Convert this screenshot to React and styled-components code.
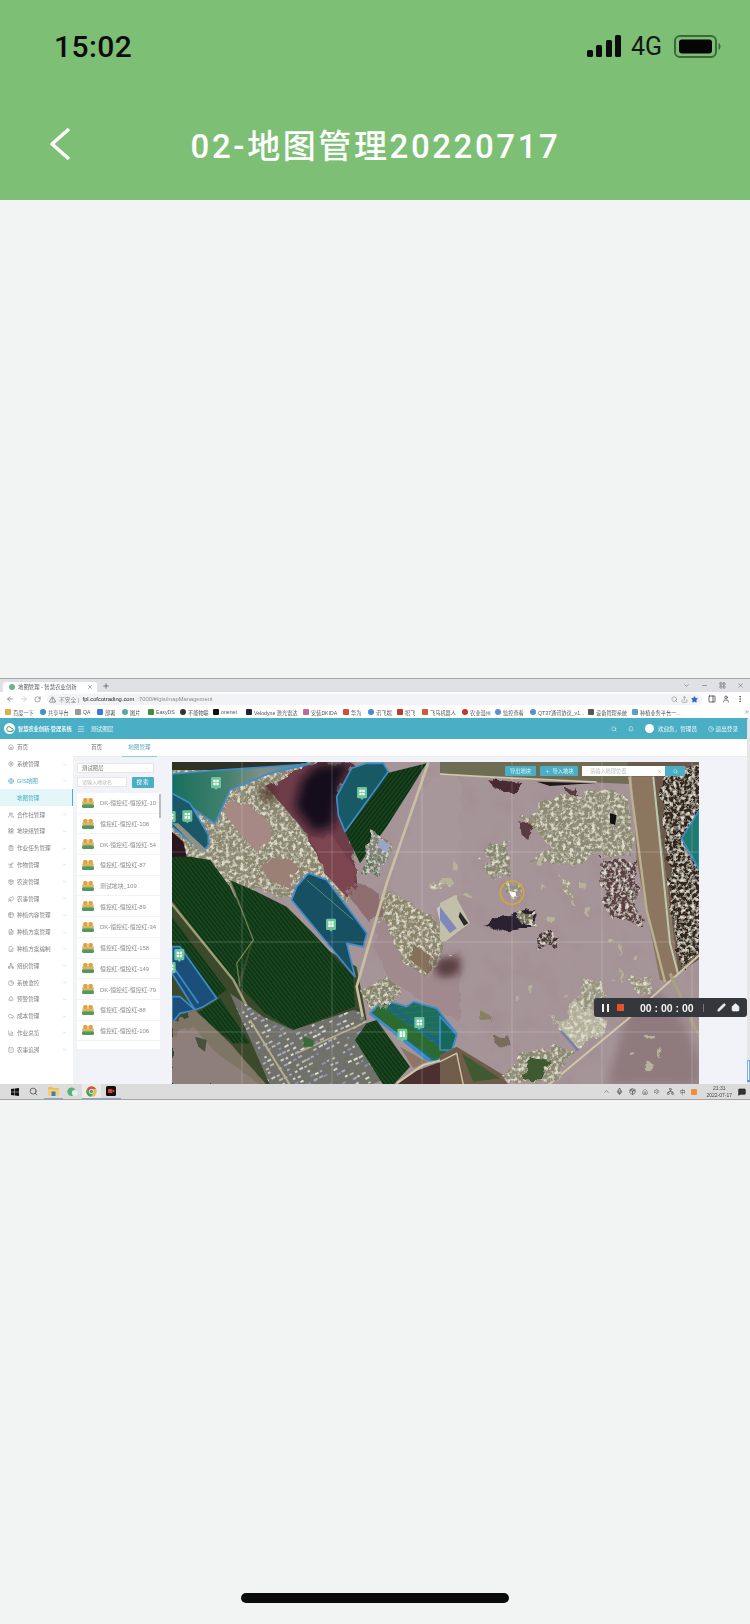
import React from 'react';
import styled, { createGlobalStyle } from 'styled-components';
import {
  Home, Settings, Globe, Users, LayoutGrid, ClipboardList, Sprout, Package, Leaf, Table2,
  FileText, FilePenLine, Network, Clock3, Bell, Cloud, BarChart3, SquareCheck,
  Search, Menu, X, Star, Share, User, MoreVertical, PanelRight, ArrowLeft, ArrowRight,
  RotateCw, TriangleAlert, Minus, ChevronDown, ChevronsRight, Plus, Mic, Volume1, MessageSquare, Pen,
} from 'lucide-react';

const FONT = '"Liberation Sans", "Noto Sans CJK SC", sans-serif';
const TEAL = '#4aaec4';

const GlobalStyle = createGlobalStyle`
  html, body { margin: 0; padding: 0; background: #f2f3f3; }
  body { font-family: ${FONT}; }
`;

// phone chrome
const Page = styled.div`
  width: 750px;
  height: 1624px;
  overflow: hidden;
  display: flex;
  flex-direction: column;
  background: #f2f3f3;
`;
const GreenHeader = styled.header`
  height: 200px;
  flex: none;
  background: #7dbf75;
`;
const StatusRow = styled.div`
  height: 92px;
  padding: 0 29px 0 54px;
  box-sizing: border-box;
  display: flex;
  align-items: center;
  justify-content: space-between;
`;
const Clock = styled.span`
  font-family: Roboto, ${FONT};
  font-size: 30px;
  font-weight: 500;
  letter-spacing: 0.4px;
  color: #0c0c0c;
`;
const StatusRight = styled.div`
  display: flex;
  align-items: center;
  gap: 10px;
`;
const Net = styled.span`
  font-family: Roboto, ${FONT};
  font-size: 25px;
  color: #161616;
  margin-right: 2px;
`;
const NavRow = styled.div`
  height: 104px;
  display: grid;
  grid-template-columns: 1fr auto 1fr;
  align-items: center;
  padding: 0 0 0 49px;
  margin-right: 48px;
`;
const NavTitle = styled.h1`
  margin: 0;
  font-family: Roboto, ${FONT};
  font-size: 33px;
  font-weight: 500;
  letter-spacing: 2.6px;
  color: #fff;
  white-space: nowrap;
`;
const HomeBar = styled.div`
  width: 268px;
  height: 10px;
  margin: 493px auto 0;
  border-radius: 5px;
  background: #0a0a0a;
`;

// the recorded desktop picture
const Frame = styled.section`
  position: relative;
  height: 422px;
  flex: none;
  margin-top: 478px;
  display: flex;
  flex-direction: column;
  overflow: hidden;
  filter: blur(0.45px);
  background: #fff;
`;
const TabStrip = styled.div`
  height: 14px;
  box-sizing: border-box;
  flex: none;
  display: flex;
  align-items: flex-end;
  background: #dfe1e5;
  border-top: 1px solid #a8a8a8;
  padding-left: 3px;
`;
const BrowserTab = styled.div`
  width: 94px;
  height: 10px;
  box-sizing: border-box;
  padding: 0 4px 0 6px;
  display: flex;
  align-items: center;
  gap: 3px;
  background: #fff;
  border-radius: 3px 3px 0 0;
  font-size: 5.4px;
  color: #555;
  white-space: nowrap;
  overflow: hidden;
`;
const TabText = styled.span`
  flex: 1;
`;
const NewTab = styled.span`
  display: flex;
  align-self: center;
  margin-left: 5px;
  color: #444;
`;
const WindowBtns = styled.div`
  margin-left: auto;
  align-self: center;
  display: flex;
  gap: 11px;
  padding-right: 6px;
  color: #666;
`;
const UrlBar = styled.div`
  height: 14px;
  flex: none;
  display: flex;
  align-items: center;
  gap: 6px;
  padding: 0 6px;
  background: #fff;
  color: #666;
`;
const Omnibox = styled.div`
  flex: 1;
  height: 11px;
  padding: 0 4px 0 2px;
  display: flex;
  align-items: center;
  gap: 3px;
  border-radius: 6px;
  background: #f1f3f4;
  font-size: 5.8px;
  color: #8a8a8a;
`;
const Host = styled.span`
  color: #222;
`;
const Spacer = styled.span`
  flex: 1;
`;
const BookmarkBar = styled.div`
  height: 12px;
  flex: none;
  display: flex;
  align-items: center;
  padding-left: 5px;
  background: #fff;
  overflow: hidden;
`;
const Bookmark = styled.span`
  width: ${p => p.$w}px;
  flex: none;
  display: flex;
  align-items: center;
  gap: 2px;
  font-size: 5.2px;
  color: #555;
  white-space: nowrap;
`;
const Fav = styled.i`
  width: 6px;
  height: 6px;
  flex: none;
  border-radius: ${p => (p.$round ? '50%' : '1px')};
  background: ${p => p.$c};
`;
const AppHeader = styled.div`
  height: 21px;
  flex: none;
  margin-right: 2px;
  display: flex;
  align-items: center;
  padding: 0 10px 0 4px;
  background: ${TEAL};
  color: #eef8fa;
  font-size: 5.6px;
`;
const Logo = styled.span`
  width: 11px;
  height: 11px;
  flex: none;
  border-radius: 50%;
  background: #fff;
  display: flex;
  align-items: center;
  justify-content: center;
  margin-right: 3px;
`;
const SystemName = styled.b`
  width: 59px;
  font-size: 5.2px;
  white-space: nowrap;
`;
const HeaderLabel = styled.span`
  margin-left: 6px;
`;
const HeaderRight = styled.div`
  margin-left: auto;
  display: flex;
  align-items: center;
`;
const HeaderIcon = styled.span`
  display: flex;
  margin-right: 11px;
`;
const Avatar = styled.span`
  width: 9px;
  height: 9px;
  margin-right: 4px;
  border-radius: 50%;
  background: #fff;
`;
const Welcome = styled.span`
  margin-right: 11px;
`;
const Body = styled.div`
  flex: 1;
  display: flex;
  min-height: 0;
`;
const Sidebar = styled.nav`
  width: 73px;
  flex: none;
  background: #fff;
`;
const SideItem = styled.div`
  height: 16.8px;
  box-sizing: border-box;
  display: flex;
  align-items: center;
  gap: 3px;
  padding: 0 ${p => (p.$sub ? 0 : 6)}px 0 ${p => (p.$sub ? 17 : 8)}px;
  font-size: 5.6px;
  white-space: nowrap;
  color: ${p => (p.$on ? TEAL : '#808080')};
  background: ${p => (p.$sub ? '#e4f6f8' : 'transparent')};
  border-right: ${p => (p.$sub ? `1.5px solid ${TEAL}` : '0')};
`;
const Caret = styled.span`
  margin-left: auto;
  display: flex;
  color: #b5b5b5;
`;
const Main = styled.div`
  flex: 1;
  display: flex;
  flex-direction: column;
  min-width: 0;
`;
const PageTabs = styled.div`
  height: 18px;
  flex: none;
  box-sizing: border-box;
  display: flex;
  background: #fff;
  padding-left: 12px;
  gap: 14px;
  border-bottom: 1px solid #ececec;
`;
const PageTab = styled.span`
  padding: 0 6px;
  line-height: 17px;
  font-size: 5.6px;
  color: ${p => (p.$on ? '#5aa9b8' : '#777')};
  border-bottom: ${p => (p.$on ? '1px solid #8fd0d8' : '0')};
  height: 17px;
`;
const Content = styled.div`
  flex: 1;
  min-height: 0;
  display: flex;
  background: #f1f3f8;
  padding: 5px 0 0 4px;
`;
const ListCol = styled.div`
  width: 83px;
  flex: none;
  padding-top: 1px;
`;
const SelectBox = styled.div`
  width: 77px;
  height: 10px;
  box-sizing: border-box;
  padding: 0 4px;
  display: flex;
  align-items: center;
  justify-content: space-between;
  background: #fff;
  border: 0.5px solid #e6e6e6;
  border-radius: 1px;
  font-size: 5.4px;
  color: #777;
`;
const SearchRow = styled.div`
  width: 77px;
  margin: 4px 0 5px;
  display: flex;
  justify-content: space-between;
`;
const NameInput = styled.div`
  width: 50px;
  height: 10px;
  box-sizing: border-box;
  padding-left: 4px;
  background: #fff;
  border: 0.5px solid #e6e6e6;
  font-size: 5px;
  line-height: 9px;
  color: #b9b9b9;
`;
const SearchBtn = styled.div`
  width: 22px;
  height: 11px;
  text-align: center;
  background: ${TEAL};
  border-radius: 1px;
  font-size: 5.6px;
  line-height: 11px;
  letter-spacing: 1px;
  color: #fff;
`;
const List = styled.div`
  position: relative;
  height: 256px;
  background: #fff;
`;
const ListItem = styled.div`
  height: 20.7px;
  box-sizing: border-box;
  display: flex;
  align-items: center;
  gap: 6px;
  padding-left: 5px;
  font-size: 5.9px;
  color: #8c8c8c;
  white-space: nowrap;
  border-bottom: 0.5px solid #f1f3f8;
`;
const ListThumb = styled.div`
  position: absolute;
  top: 1px;
  right: -1px;
  width: 2px;
  height: 24px;
  background: #b9bcc2;
`;
const MapWrap = styled.div`
  position: relative;
  width: 527px;
  flex: none;
  margin-left: 12px;
  overflow: hidden;
`;
const MapSvg = styled.svg`
  display: block;
  filter: blur(0.55px);
`;
const MapTools = styled.div`
  position: absolute;
  top: 4px;
  right: 14px;
  display: flex;
  align-items: stretch;
  height: 10px;
  gap: 4px;
  font-size: 5.2px;
  line-height: 10px;
  color: #eafafc;
`;
const ToolBtn = styled.span`
  width: ${p => p.$w}px;
  display: flex;
  align-items: center;
  justify-content: center;
  gap: 3px;
  background: ${TEAL};
  border-radius: 1px;
`;
const PlaceSearch = styled.div`
  display: flex;
`;
const PlaceInput = styled.div`
  width: 83px;
  box-sizing: border-box;
  padding: 0 3px 0 8px;
  display: flex;
  align-items: center;
  justify-content: space-between;
  background: #fff;
  color: #bbb;
`;
const PlaceBtn = styled.span`
  width: 20px;
  display: flex;
  align-items: center;
  justify-content: center;
  background: ${TEAL};
`;
const Taskbar = styled.div`
  height: 16px;
  flex: none;
  box-sizing: border-box;
  display: flex;
  align-items: center;
  padding: 0 4px 0 5px;
  background: #dcdcdc;
  border-bottom: 1px solid #a5a5a5;
`;
const TaskSlot = styled.span`
  width: 19.3px;
  height: 15px;
  display: flex;
  align-items: center;
  justify-content: center;
  box-sizing: border-box;
  background: ${p => (p.$active ? '#ebebeb' : 'transparent')};
  border-bottom: ${p => (p.$open ? '1px solid #8aa7c9' : '0')};
  color: #444;
`;
const Tray = styled.div`
  margin-left: auto;
  display: flex;
  align-items: center;
  gap: 6px;
  color: #555;
  font-size: 5.5px;
`;
const TrayClock = styled.span`
  margin-left: 3px;
  text-align: center;
  line-height: 7px;
  font-size: 5px;
  color: #444;
`;
const RecBar = styled.div`
  position: absolute;
  left: 594px;
  top: 320px;
  width: 153px;
  height: 19px;
  box-sizing: border-box;
  display: flex;
  align-items: center;
  padding-left: 8px;
  background: #34373b;
  border-radius: 3px;
  color: #f2f2f2;
`;
const PauseIcon = styled.span`
  width: 7px;
  height: 8px;
  flex: none;
  box-sizing: border-box;
  border-left: 2px solid #eee;
  border-right: 2px solid #eee;
`;
const StopIcon = styled.span`
  width: 7px;
  height: 7px;
  flex: none;
  margin: 0 16px 0 8px;
  background: #e5532f;
`;
const RecTime = styled.span`
  width: 55px;
  flex: none;
  font-size: 10.5px;
  font-weight: 700;
  white-space: pre;
`;
const RecSep = styled.span`
  width: 1px;
  height: 8px;
  flex: none;
  margin: 0 13px 0 8px;
  background: #777;
`;
const RecTools = styled.span`
  display: flex;
  gap: 5px;
  align-items: center;
`;
const PageScroll = styled.div`
  position: absolute;
  right: 0;
  top: 41px;
  bottom: 16px;
  width: 3px;
  background: #e6e6e6;
`;
const ScrollThumb = styled.div`
  position: absolute;
  right: 0;
  bottom: 2px;
  width: 3px;
  height: 22px;
  box-sizing: border-box;
  background: #f0f6fd;
  border: 0.5px solid #78aeea;
  border-bottom: 2px solid #4f8fe0;
`;

const MENU = [
  [Home, '首页', false],
  [Settings, '系统管理', true],
  [Globe, 'GIS地图', true, true],
  ['sub', '地图管理'],
  [Users, '合作社管理', true],
  [LayoutGrid, '地块组管理', true],
  [ClipboardList, '作业任务管理', true],
  [Sprout, '作物管理', true],
  [Package, '农资管理', true],
  [Leaf, '农事管理', true],
  [Table2, '种植内容管理', true],
  [FileText, '种植方案管理', true],
  [FilePenLine, '种植方案编制', true],
  [Network, '组织管理', true],
  [Clock3, '系统监控', true],
  [Bell, '预警管理', true],
  [Cloud, '成本管理', true],
  [BarChart3, '作业总览', true],
  [SquareCheck, '农事追溯', true],
];

const PLOTS = [
  'DK-恒控红-恒控红-10', '恒控红-恒控红-108', 'DK-恒控红-恒控红-54', '恒控红-恒控红-87',
  '测试地块_109', '恒控红-恒控红-89', 'DK-恒控红-恒控红-34', '恒控红-恒控红-158',
  '恒控红-恒控红-149', 'DK-恒控红-恒控红-79', '恒控红-恒控红-88', '恒控红-恒控红-106',
];

const BOOKMARKS = [
  ['百度一下', 35, '#e0b040'], ['共享平台', 35, '#3f8fd0', 1], ['QA', 22, '#999'], ['部署', 25, '#3a7bd5'],
  ['图片', 26, '#5aa9a0', 1], ['EasyDS', 32, '#3c8f3c'], ['不能物联', 33, '#333', 1], ['onenet', 33, '#111'],
  ['Velodyne 激光雷达', 57, '#223'], ['安装DKIDA', 40, '#c06a9a'], ['华为', 25, '#d0503c'], ['讯飞端', 29, '#3f8fd0', 1],
  ['招飞', 25, '#c0392b'], ['飞马机器人', 40, '#d05a3c'], ['农业温州', 33, '#c0392b', 1], ['监控查看', 35, '#5b8fd0', 1],
  ['QT37通讯协议_v1...', 58, '#5b8fd0', 1], ['设备管理系统', 44, '#555'], ['种植业务平台一...', 60, '#5aa0c0'],
];

// plot thumbnail of the list rows
const PlotIcon = () => (
  <svg width="12" height="10" viewBox="0 0 12 10">
    <rect x="0" y="6" width="12" height="4" rx="1.5" fill="#4f9a5c" />
    <rect x="0.3" y="3.4" width="11.4" height="3" fill="#d7b468" />
    <rect x="1.2" y="0" width="4.4" height="4" rx="1.5" fill="#e0a23e" />
    <rect x="6.4" y="0" width="4.4" height="4" rx="1.5" fill="#e0a23e" />
  </svg>
);

const WinIcon = () => (
  <svg width="8" height="8" viewBox="0 0 8 8">
    <path d="M0 1.1 3.5.6v3.1H0zM4 .5 8 0v3.7H4zM0 4.2h3.5v3.2L0 6.9zM4 4.2h4V8l-4-.6z" fill="#111" />
  </svg>
);
const FolderIcon = () => (
  <svg width="11" height="10" viewBox="0 0 11 10">
    <path d="M0 1h4l1 1h6v2H0z" fill="#e7c05a" />
    <path d="M0 3.5h11V10H0z" fill="#f0d178" />
    <path d="M3.5 5.5h4V10h-4z" fill="#3e7fb5" />
  </svg>
);
const ChatIcon = () => (
  <svg width="11" height="10" viewBox="0 0 11 10">
    <circle cx="4.5" cy="4.8" r="4.2" fill="#52b27a" />
    <circle cx="7.8" cy="6" r="3" fill="#e6efe9" />
  </svg>
);
const ChromeIcon = () => (
  <svg width="11" height="11" viewBox="0 0 11 11">
    <circle cx="5.5" cy="5.5" r="5.2" fill="#e2c13c" />
    <path d="M5.5.3A5.2 5.2 0 0 0 1 3l2.4 4A2.5 2.5 0 0 1 5.5 3h4.6A5.2 5.2 0 0 0 5.5.3z" fill="#d9503f" />
    <path d="M1 3a5.2 5.2 0 0 0 3.9 7.7L7.3 7A2.5 2.5 0 0 1 3.4 7z" fill="#4aa05a" />
    <circle cx="5.5" cy="5.5" r="2.1" fill="#4a86e0" stroke="#fff" strokeWidth=".7" />
  </svg>
);
const RecIcon = () => (
  <svg width="10" height="10" viewBox="0 0 10 10">
    <rect width="10" height="10" rx="1.5" fill="#111" />
    <rect x="2" y="3" width="4.5" height="4" rx=".8" fill="#d9413a" />
    <path d="M6.5 4.5 8.3 3.4v3.2L6.5 5.5z" fill="#d9413a" />
  </svg>
);

// --- satellite picture, in zoomed reference coordinates (3 units = 1px) ---
const rng = seed => () => {
  seed = (seed * 16807) % 2147483647;
  return seed / 2147483647;
};

const villageHouses = (() => {
  const r = rng(91);
  const colors = ['#cfcfcb', '#a4abc2', '#bdb8a8', '#8a90aa', '#dedcd2', '#6d7060'];
  const out = [];
  for (let u = -22; u < 32; u++) {
    for (let v = 0; v < 24; v++) {
      if (r() < 0.25) continue;
      out.push({
        x: 250 + u * 15 + v * 9 + r() * 4,
        y: 715 - u * 8 + v * 14 + r() * 4,
        w: 7 + r() * 7,
        c: colors[Math.floor(r() * colors.length)],
      });
    }
  }
  return out;
})();

// little islets on the flooded plain, right half
const ISLETS = [
  [45, 320, 9, 12], [80, 405, 11, 5], [310, 385, 5, 10], [430, 380, 10, 12], [440, 450, 6, 16], [335, 480, 13, 9],
  [515, 545, 9, 6], [545, 650, 4, 20], [540, 570, 3, 18], [580, 590, 8, 7], [275, 690, 7, 13], [235, 720, 4, 10],
  [380, 710, 6, 5], [520, 660, 5, 4], [400, 430, 5, 6], [20, 365, 22, 8], [300, 300, 14, 18], [630, 830, 15, 6],
  [660, 880, 6, 18], [625, 920, 14, 14], [580, 885, 8, 5], [30, 585, 5, 4],
];

const Poly = ({ p, f, ...rest }) => <polygon points={p} fill={f} {...rest} />;

const Pin = ({ x, y }) => (
  <g transform={`translate(${x - 15} ${y - 19})`}>
    <path d="M4 0h22a4 4 0 0 1 4 4v26a4 4 0 0 1-4 4h-6l-5 5-5-5H4a4 4 0 0 1-4-4V4a4 4 0 0 1 4-4z" fill="#6cc59a" />
    <path d="M7 8h7v7H7zM16 8h7v7h-7zM7 17h7v8H7zM16 17h7v8h-7z" fill="#fff" />
  </g>
);

const TEAL_STROKE = { stroke: '#3f8ccc', strokeWidth: 5, strokeLinejoin: 'round' };

const SatelliteMap = () => (
  <MapSvg width="527" height="323" viewBox="0 0 1581 969">
    <defs>
      <filter id="rough" x="-15%" y="-15%" width="130%" height="130%">
        <feTurbulence type="fractalNoise" baseFrequency="0.03" numOctaves="3" seed="7" result="n" />
        <feDisplacementMap in="SourceGraphic" in2="n" scale="34" />
        <feGaussianBlur stdDeviation="1.5" />
      </filter>
      <filter id="soft" x="-40%" y="-40%" width="180%" height="180%">
        <feGaussianBlur stdDeviation="14" />
      </filter>
      <filter id="speckle" x="-15%" y="-15%" width="130%" height="130%">
        <feTurbulence type="fractalNoise" baseFrequency="0.024" numOctaves="4" seed="7" result="wob" />
        <feDisplacementMap in="SourceGraphic" in2="wob" scale="55" result="shape" />
        <feTurbulence type="fractalNoise" baseFrequency="0.09" numOctaves="3" seed="4" result="n" />
        <feColorMatrix in="n" type="matrix" values="0 0 0 0 .76  0 0 0 0 .74  0 0 0 0 .64  3.2 0 0 0 -1.45" result="spots" />
        <feComposite in="spots" in2="shape" operator="in" result="pale" />
        <feColorMatrix in="n" type="matrix" values="0 0 0 0 .4  0 0 0 0 .39  0 0 0 0 .3  0 -3 0 0 1.2" result="dots" />
        <feComposite in="dots" in2="shape" operator="in" result="dark" />
        <feMerge>
          <feMergeNode in="shape" />
          <feMergeNode in="dark" />
          <feMergeNode in="pale" />
        </feMerge>
        <feGaussianBlur stdDeviation="1" />
      </filter>
      <filter id="grain" x="0" y="0" width="100%" height="100%">
        <feTurbulence type="fractalNoise" baseFrequency="0.012" numOctaves="4" seed="12" />
        <feColorMatrix type="matrix" values="0 0 0 0 .34  0 0 0 0 .24  0 0 0 0 .27  3 0 0 0 -1.35" />
      </filter>
      <pattern id="field" width="10" height="10" patternUnits="userSpaceOnUse" patternTransform="rotate(52)">
        <rect width="10" height="10" fill="#15401b" />
        <rect width="10" height="2.5" fill="#0c2e13" />
        <rect y="6" width="10" height="1.5" fill="#1c4b22" />
      </pattern>
      <pattern id="fieldUp" width="10" height="10" patternUnits="userSpaceOnUse" patternTransform="rotate(-52)">
        <rect width="10" height="10" fill="#143c19" />
        <rect width="10" height="2.5" fill="#0b2a11" />
        <rect y="6" width="10" height="1.5" fill="#1d4922" />
      </pattern>
      <pattern id="ripple" width="18" height="18" patternUnits="userSpaceOnUse" patternTransform="rotate(-6)">
        <rect width="18" height="18" fill="#1d6c5c" />
        <rect width="18" height="3" fill="#277464" />
      </pattern>
      <linearGradient id="topField" x1="0" y1="0" x2="1" y2="0">
        <stop offset="0" stopColor="#16705c" />
        <stop offset="0.4" stopColor="#45806f" />
        <stop offset="0.65" stopColor="#80908a" />
        <stop offset="1" stopColor="#4c8caa" />
      </linearGradient>
      <clipPath id="villageClip">
        <polygon points="180,700 280,770 370,810 550,750 580,760 640,960 600,975 300,975" />
      </clipPath>
    </defs>

    <rect width="1581" height="969" fill="#a69598" />
    <rect width="1581" height="969" filter="url(#grain)" opacity=".32" />

    {/* left half */}
    <g transform="translate(-6 -6)">
      <Poly p="0,0 500,0 560,330 540,430 370,420 180,380 0,320" f="#8a876e" filter="url(#speckle)" />
      <Poly p="0,300 560,620 590,780 340,975 0,975" f="#3c4a2c" />
      <Poly p="6,6 420,6 300,30 6,30" f="#2f3326" />
      <Poly p="290,80 420,10 560,10 500,80 560,330 565,375 525,405 470,345 400,210" f="#6e3d48" filter="url(#rough)" />
      <Poly p="420,230 490,230 560,330 560,380 525,405 470,345" f="#7c444f" filter="url(#rough)" />
      <Poly p="375,140 395,60 440,15 545,10 510,70 490,200 430,215" f="#17101c" filter="url(#soft)" />
      <Poly p="170,125 230,130 300,190 305,240 260,275 210,220 170,170" f="#a68884" filter="url(#rough)" />
      <Poly p="270,310 350,290 385,320 360,385 300,360" f="#9a8075" filter="url(#rough)" />
      <Poly p="270,85 310,75 315,115 280,130" f="#4d3428" filter="url(#soft)" />

      <Poly p="6,42 150,30 420,12 300,40 180,90 135,190 105,170 6,100" f="url(#topField)" {...TEAL_STROKE} />
      <Poly p="6,100 60,130 115,225 115,255 100,275 6,200" f="#1a5868" {...TEAL_STROKE} />
      <Poly p="6,190 25,190 110,270 95,278" f="#8f9189" />
      <Poly p="6,215 40,245 50,290 20,310 6,310" f="#2a1420" />

      <Poly p="650,40 770,10 720,90 650,200 570,310 525,215" f="url(#fieldUp)" />
      <Poly p="500,110 545,25 590,10 640,10 655,35 525,215 505,165" f="#175a66" {...TEAL_STROKE} />
      <Poly p="610,215 665,250 640,330 585,325" f="#7c8074" filter="url(#speckle)" />
      <Poly p="630,235 660,255 650,280 625,260" f="#9aa6c8" />
      <Poly p="590,290 640,300 620,345 570,350" f="#61745e" filter="url(#speckle)" />

      <Poly p="780,50 870,40 870,410 760,470 680,400 660,380 720,210" f="#a8979a" filter="url(#rough)" />
      <Poly p="785,365 810,355 850,350 820,395 790,395" f="#a8a288" filter="url(#speckle)" />
      <Poly p="640,380 790,470 830,540 790,650 700,630 640,550 620,470" f="#8a856a" filter="url(#speckle)" />
      <Poly p="730,555 785,590 770,640 720,600" f="#86705a" filter="url(#rough)" />
      <Poly p="800,445 860,405 870,510 825,545" f="#c7c6c0" />
      <Poly p="820,440 860,420 868,495 850,500" f="#8e97c4" />
      <Poly p="530,400 570,370 625,400 640,470 600,490" f="#8f6e72" filter="url(#rough)" />
      <Poly p="640,470 700,610 770,650 870,570 870,790 720,700 650,650 610,540" f="#a08a8e" filter="url(#rough)" />
      <Poly p="790,610 870,590 870,640 810,650" f="#5b3d44" filter="url(#soft)" />

      <Poly p="6,290 60,290 120,300 180,380 250,530 200,680 6,420" f="url(#field)" />
      <Poly p="180,360 260,395 350,440 420,510 550,650 555,740 370,810 285,760 210,680 250,540" f="url(#field)" />
      <polyline points="180,360 250,540 200,610 210,680" fill="none" stroke="#6d7f4e" strokeWidth="4" />
      <Poly p="415,340 470,360 590,520 580,560 530,550 555,650 365,420 380,380" f="#174f63" {...TEAL_STROKE} />
      <polyline points="410,360 550,480" fill="none" stroke="#4c8c76" strokeWidth="3" />

      <Poly p="6,470 170,690 135,715 75,750 6,640" f="url(#field)" />
      <Poly p="6,560 30,560 140,715 100,740 75,750 6,640" f="#1b4f7a" {...TEAL_STROKE} />
      <polyline points="6,615 85,730" fill="none" stroke="#3f8ccc" strokeWidth="5" />
      <Poly p="6,710 30,710 75,750 30,760 6,790" f="#1b4f7a" {...TEAL_STROKE} />
      <Poly p="80,760 150,715 240,850 190,850" f="url(#field)" />
      <polyline points="0,425 190,660 350,970" fill="none" stroke="#a09d78" strokeWidth="7" />
      <Poly p="6,790 75,750 180,850 290,975 6,975" f="#7f7465" filter="url(#rough)" />
      <Poly p="6,835 70,800 130,870 270,975 6,975" f="#8f7f7a" filter="url(#rough)" />
      <Poly p="75,830 110,840 105,875 85,860" f="#47513c" />

      <Poly p="180,700 280,770 370,810 550,750 580,760 640,960 600,975 300,975" f="#70716a" />
      <g clipPath="url(#villageClip)">
        {villageHouses.map((h, i) => (
          <rect key={i} x={h.x} y={h.y} width={h.w} height="6" fill={h.c} transform={`rotate(-28 ${h.x} ${h.y})`} />
        ))}
        <polyline points="240,780 360,975" fill="none" stroke="#b5ad8d" strokeWidth="6" />
        <polyline points="380,880 580,790" fill="none" stroke="#b5ad8d" strokeWidth="5" />
      </g>
      <Poly p="400,830 430,840 430,860 400,860" f="#356b35" />

      <Poly p="590,790 620,780 720,920 670,975 640,975 555,840" f="url(#field)" />
      <Poly p="600,760 640,720 710,740 730,725 800,745 860,820 850,860 800,905 770,900" f="url(#ripple)" {...TEAL_STROKE} />
      <Poly p="625,735 825,875 800,895 610,770" f="#2c6a30" />
      <polyline points="640,722 835,868" fill="none" stroke="#1f5f96" strokeWidth="6" />
      <polyline points="600,760 780,900" fill="none" stroke="#3f8ccc" strokeWidth="8" />
      <Poly p="690,860 770,905 730,925" f="#8e7566" />
      <Poly p="720,940 800,910 870,895 870,975 680,975" f="#4c3031" />
      <polyline points="680,970 760,915 870,885" fill="none" stroke="#cfc7a6" strokeWidth="6" />
      <polyline points="775,8 650,370 560,680 578,770" fill="none" stroke="#c9bfa2" strokeWidth="8" />
      <Poly p="570,690 650,650 700,690 600,750" f="#85846a" filter="url(#speckle)" />
    </g>

    {/* right half */}
    <g transform="translate(804 -6)">
      <Poly p="0,6 570,6 570,72 350,62 130,52 0,40" f="#6f6c54" />
      <polyline points="0,42 130,50 470,66" fill="none" stroke="#cfc8a8" strokeWidth="5" />
      <Poly p="140,55 250,70 220,100 160,82" f="#492a30" filter="url(#rough)" />
      <Poly p="290,65 470,70 420,72 330,78" f="#1e1a18" />
      <Poly p="380,90 420,95 400,135" f="#5c3a40" filter="url(#rough)" />
      <Poly p="240,175 350,110 420,100 500,90 570,120 575,270 500,290 440,285 400,310 340,310 280,320 300,280 340,270 290,210" f="#8c8a72" filter="url(#speckle)" />
      <Poly p="510,160 530,165 525,195 510,190" f="#111" />
      <Poly p="240,190 275,195 265,240 245,225" f="#5c3a40" filter="url(#rough)" />
      <Poly p="120,310 180,240 200,230 215,340 150,350" f="#85856e" filter="url(#speckle)" />
      <Poly p="350,340 400,370 400,410 375,400" f="#9a957e" filter="url(#speckle)" />
      <Poly p="195,370 240,365 250,400 210,410" f="#8e8c76" filter="url(#speckle)" />
      {ISLETS.map(([cx, cy, rx, ry]) => (
        <ellipse key={`${cx}-${cy}`} cx={cx} cy={cy} rx={rx} ry={ry} fill="#b7b39b" filter="url(#rough)" />
      ))}
      <Poly p="130,495 200,470 285,450 290,500 190,515" f="#2a2230" filter="url(#rough)" />
      <Poly p="235,460 285,450 288,498 240,490" f="#6f6d52" filter="url(#speckle)" />
      <Poly p="290,520 340,515 350,560 295,575" f="#4c3338" filter="url(#speckle)" />
      <Poly p="490,300 590,300 600,490 520,480 490,430" f="#5b3e45" filter="url(#speckle)" />
      <Poly p="0,600 50,600 30,640 0,640" f="#5a4040" filter="url(#soft)" />

      <Poly p="0,430 45,405 90,490 10,545 0,540" f="#c3c0a9" />
      <Poly p="0,440 50,505 30,520 0,480" f="#7f88ba" />
      <Poly p="60,455 85,490 72,497 56,470" f="#2a2a2a" />

      <Poly p="560,6 790,6 790,590 715,640 640,50 575,50" f="#6b5a4c" />
      <Poly p="575,50 640,50 715,640 700,665 660,660 590,300" f="#8c7660" />
      <polyline points="568,50 620,450 675,665" fill="none" stroke="#b9b292" strokeWidth="7" />
      <polyline points="640,50 690,550 715,645" fill="none" stroke="#bac9ad" strokeWidth="6" />
      <Poly p="662,50 790,20 790,590 722,625 700,500" f="#35251f" filter="url(#speckle)" />
      <Poly p="778,150 725,235 778,330" f="#1f7a70" {...TEAL_STROKE} />

      <Poly p="560,770 650,690 740,800 778,900 778,975 500,975" f="#8f7a7e" filter="url(#soft)" />
      {ISLETS.slice(-5).map(([cx, cy, rx, ry]) => (
        <ellipse key={`${cx}-${cy}`} cx={cx} cy={cy} rx={rx} ry={ry} fill="#b7b39b" filter="url(#rough)" />
      ))}
      <Poly p="340,790 430,730 510,790 410,870" f="#b4b19a" filter="url(#speckle)" />
      <polyline points="362,812 415,872" fill="none" stroke="#7a7ea8" strokeWidth="8" />
      <Poly p="410,680 470,650 505,720 430,750" f="#96947a" filter="url(#speckle)" />
      <Poly p="570,660 630,635 640,700 590,700" f="#96937c" filter="url(#speckle)" />
      <polyline points="325,975 560,780 660,690 778,585" fill="none" stroke="#cdc6a8" strokeWidth="6" />
      <polyline points="690,640 778,830" fill="none" stroke="#a9a184" strokeWidth="10" />
      <Poly p="115,745 155,770 150,788 125,785" f="#8a8062" filter="url(#rough)" />
      <Poly p="160,825 210,830 215,860 170,855" f="#7a6c5a" filter="url(#rough)" />

      <Poly p="0,770 50,825 35,870 0,870" f="#17685a" {...TEAL_STROKE} />
      <Poly p="0,885 50,860 190,945 205,975 0,975" f="#6f5c4a" />
      <Poly p="65,880 180,955 100,965" f="#3f5a30" />
      <Poly p="190,960 260,870 400,860 340,975" f="#8a886f" filter="url(#speckle)" />
      <Poly p="270,890 330,900 310,960 250,960" f="#3d5a32" filter="url(#rough)" />
      <polyline points="0,905 50,880 70,975" fill="none" stroke="#cfc8a8" strokeWidth="4" />
    </g>

    {/* map tile seams */}
    <path d="M210 0V969M480 0V969M750 0V969M1020 0V969M1290 0V969M1560 0V969M0 270H1581M0 540H1581M0 810H1581" stroke="#fff" strokeOpacity=".2" strokeWidth="3" fill="none" />

    <g transform="translate(-6 -6)">
      <Pin x={138} y={70} />
      <Pin x={52} y={170} />
      <Pin x={2} y={172} />
      <Pin x={576} y={100} />
      <Pin x={483} y={495} />
      <Pin x={28} y={586} />
      <Pin x={2} y={625} />
      <Pin x={748} y={790} />
      <Pin x={697} y={825} />
    </g>

    <g transform="translate(804 -6)">
      <circle cx="216" cy="398" r="35" fill="none" stroke="#d6a53d" strokeWidth="5" />
      <path d="M207 392l10 4 10 1 1 12-12 3-6-10z" fill="#fff" />
    </g>
  </MapSvg>
);

export default function App() {
  return (
    <>
      <GlobalStyle />
      <Page>
        <GreenHeader>
          <StatusRow>
            <Clock>15:02</Clock>
            <StatusRight>
              <svg width="34" height="22" viewBox="0 0 34 22">
                <rect x="0" y="15" width="6" height="7" rx="1.5" fill="#0c0c0c" />
                <rect x="9" y="10" width="6" height="12" rx="1.5" fill="#0c0c0c" />
                <rect x="19" y="5" width="6" height="17" rx="1.5" fill="#0c0c0c" />
                <rect x="28" y="0" width="6" height="22" rx="1.5" fill="#0c0c0c" />
              </svg>
              <Net>4G</Net>
              <svg width="47" height="23" viewBox="0 0 47 23">
                <rect x="1" y="1" width="41" height="21" rx="5" fill="none" stroke="#3a6a38" strokeWidth="2" />
                <rect x="5" y="4.5" width="33" height="14" rx="3" fill="#050505" />
                <path d="M44.5 8c1.5.5 2 2 2 3.5s-.5 3-2 3.5z" fill="#3a6a38" />
              </svg>
            </StatusRight>
          </StatusRow>
          <NavRow>
            <svg width="22" height="34" viewBox="0 0 22 34">
              <path d="M20 2 3 17l17 15" fill="none" stroke="#fff" strokeWidth="3.6" strokeLinejoin="round" />
            </svg>
            <NavTitle>02-地图管理20220717</NavTitle>
          </NavRow>
        </GreenHeader>

        <Frame>
          <TabStrip>
            <BrowserTab>
              <Fav $c="#6bb38a" $round />
              <TabText>地图管理 - 智慧农业创新</TabText>
              <X size={6} />
            </BrowserTab>
            <NewTab><Plus size={8} /></NewTab>
            <WindowBtns>
              <ChevronDown size={7} />
              <Minus size={7} />
              <LayoutGrid size={7} />
              <X size={7} />
            </WindowBtns>
          </TabStrip>
          <UrlBar>
            <ArrowLeft size={8} />
            <ArrowRight size={8} color="#bbb" />
            <RotateCw size={7} />
            <Omnibox>
              <TriangleAlert size={7} color="#555" />
              不安全 | <Host>fpl.cofcotrading.com</Host>:7000/#/gis/mapManagement
              <Spacer />
              <Search size={7} />
              <Share size={7} />
              <Star size={7} fill="#2e64c8" color="#2e64c8" />
            </Omnibox>
            <PanelRight size={8} color="#222" />
            <User size={8} color="#333" />
            <MoreVertical size={8} color="#333" />
          </UrlBar>
          <BookmarkBar>
            {BOOKMARKS.map(([name, w, c, round]) => (
              <Bookmark key={name} $w={w}>
                <Fav $c={c} $round={round} />
                {name}
              </Bookmark>
            ))}
            <Spacer />
            <ChevronsRight size={6} color="#666" />
          </BookmarkBar>
          <AppHeader>
            <Logo>
              <Cloud size={8} color="#3f9c72" strokeWidth={3} />
            </Logo>
            <SystemName>智慧农业创新-管理系统</SystemName>
            <Menu size={8} />
            <HeaderLabel>测试图层</HeaderLabel>
            <HeaderRight>
              <HeaderIcon><Search size={6} /></HeaderIcon>
              <HeaderIcon><Bell size={6} /></HeaderIcon>
              <Avatar />
              <Welcome>欢迎您，管理员</Welcome>
              <Clock3 size={6} />
              &nbsp;退出登录
            </HeaderRight>
          </AppHeader>
          <Body>
            <Sidebar>
              {MENU.map(([Icon, label, caret, on]) =>
                Icon === 'sub' ? (
                  <SideItem key={label} $sub $on>{label}</SideItem>
                ) : (
                  <SideItem key={label} $on={on}>
                    <Icon size={6} />
                    {label}
                    {caret && <Caret><ChevronDown size={5} /></Caret>}
                  </SideItem>
                ),
              )}
            </Sidebar>
            <Main>
              <PageTabs>
                <PageTab>首页</PageTab>
                <PageTab $on>地图管理</PageTab>
              </PageTabs>
              <Content>
                <ListCol>
                  <SelectBox>
                    测试图层
                    <ChevronDown size={5} color="#ccc" />
                  </SelectBox>
                  <SearchRow>
                    <NameInput>请输入地块名</NameInput>
                    <SearchBtn>搜索</SearchBtn>
                  </SearchRow>
                  <List>
                    {PLOTS.map(name => (
                      <ListItem key={name}>
                        <PlotIcon />
                        {name}
                      </ListItem>
                    ))}
                    <ListThumb />
                  </List>
                </ListCol>
                <MapWrap>
                  <SatelliteMap />
                  <MapTools>
                    <ToolBtn $w={31}>导出地块</ToolBtn>
                    <ToolBtn $w={38}><Plus size={5} />导入地块</ToolBtn>
                    <PlaceSearch>
                      <PlaceInput>
                        请输入地理位置
                        <X size={5} color="#999" />
                      </PlaceInput>
                      <PlaceBtn><Search size={5} /></PlaceBtn>
                    </PlaceSearch>
                  </MapTools>
                </MapWrap>
              </Content>
            </Main>
          </Body>
          <Taskbar>
            <TaskSlot><WinIcon /></TaskSlot>
            <TaskSlot><Search size={9} /></TaskSlot>
            <TaskSlot $open><FolderIcon /></TaskSlot>
            <TaskSlot><ChatIcon /></TaskSlot>
            <TaskSlot $active $open><ChromeIcon /></TaskSlot>
            <TaskSlot $open><RecIcon /></TaskSlot>
            <Tray>
              <ChevronDown size={7} style={{ transform: 'rotate(180deg)' }} />
              <Mic size={7} color="#222" />
              <Package size={7} color="#333" />
              <Home size={6} />
              <Volume1 size={7} />
              <Network size={7} />
              <span>中</span>
              <Fav $c="#ef8f3a" />
              <TrayClock>21:31<br />2022-07-17</TrayClock>
              <MessageSquare size={8} color="#222" fill="#333" />
            </Tray>
          </Taskbar>
          <RecBar>
            <PauseIcon />
            <StopIcon />
            <RecTime>00 : 00 : 00</RecTime>
            <RecSep />
            <RecTools>
              <Pen size={9} fill="#eee" />
              <Home size={9} fill="#eee" />
            </RecTools>
          </RecBar>
          <PageScroll>
            <ScrollThumb />
          </PageScroll>
        </Frame>

        <HomeBar />
      </Page>
    </>
  );
}
